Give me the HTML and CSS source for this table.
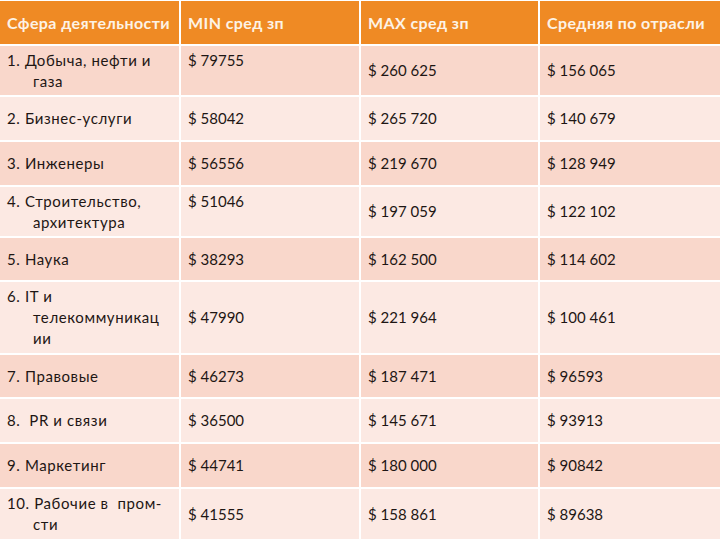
FILE: index.html
```html
<!DOCTYPE html>
<html lang="ru">
<head>
<meta charset="utf-8">
<link rel="stylesheet" href="styles.css">
</head>
<body>
<div class="table">
  <div class="row head">
    <div class="cell">Сфера деятельности</div>
    <div class="cell">MIN сред зп</div>
    <div class="cell">MAX сред зп</div>
    <div class="cell">Средняя по отрасли</div>
  </div>
  <div class="row odd h49">
    <div class="cell name top"><span class="line">1. Добыча, нефти и</span><span class="line cont">газа</span></div>
    <div class="cell top">$ 79755</div>
    <div class="cell">$ 260 625</div>
    <div class="cell">$ 156 065</div>
  </div>
  <div class="row even h43">
    <div class="cell name"><span class="line">2. Бизнес-услуги</span></div>
    <div class="cell">$ 58042</div>
    <div class="cell">$ 265 720</div>
    <div class="cell">$ 140 679</div>
  </div>
  <div class="row odd h43">
    <div class="cell name"><span class="line">3. Инженеры</span></div>
    <div class="cell">$ 56556</div>
    <div class="cell">$ 219 670</div>
    <div class="cell">$ 128 949</div>
  </div>
  <div class="row even h49">
    <div class="cell name top"><span class="line">4. Строительство,</span><span class="line cont">архитектура</span></div>
    <div class="cell top">$ 51046</div>
    <div class="cell">$ 197 059</div>
    <div class="cell">$ 122 102</div>
  </div>
  <div class="row odd h42">
    <div class="cell name"><span class="line">5. Наука</span></div>
    <div class="cell">$ 38293</div>
    <div class="cell">$ 162 500</div>
    <div class="cell">$ 114 602</div>
  </div>
  <div class="row even h71">
    <div class="cell name"><span class="line">6. IT и</span><span class="line cont">телекоммуникац</span><span class="line cont">ии</span></div>
    <div class="cell">$ 47990</div>
    <div class="cell">$ 221 964</div>
    <div class="cell">$ 100 461</div>
  </div>
  <div class="row odd h42">
    <div class="cell name"><span class="line">7. Правовые</span></div>
    <div class="cell">$ 46273</div>
    <div class="cell">$ 187 471</div>
    <div class="cell">$ 96593</div>
  </div>
  <div class="row even h43">
    <div class="cell name"><span class="line">8. &nbsp;PR и связи</span></div>
    <div class="cell">$ 36500</div>
    <div class="cell">$ 145 671</div>
    <div class="cell">$ 93913</div>
  </div>
  <div class="row odd h43">
    <div class="cell name"><span class="line">9. Маркетинг</span></div>
    <div class="cell">$ 44741</div>
    <div class="cell">$ 180 000</div>
    <div class="cell">$ 90842</div>
  </div>
  <div class="row even h50">
    <div class="cell name"><span class="line">10. Рабочие в &nbsp;пром-</span><span class="line cont">сти</span></div>
    <div class="cell">$ 41555</div>
    <div class="cell">$ 158 861</div>
    <div class="cell">$ 89638</div>
  </div>
</div>
</body>
</html>
```

FILE: styles.css
```css
html, body {
  margin: 0;
  padding: 0;
  background: #ffffff;
}
body {
  width: 720px;
  height: 540px;
  overflow: hidden;
  padding-top: 1px;
  font-family: Lato, "Liberation Sans", sans-serif;
  font-size: 15px;
  color: #1e1614;
}
.table {
  display: flex;
  flex-direction: column;
  gap: 2px;
}
.row {
  display: grid;
  grid-template-columns: 179px 178px 177px 180px;
  column-gap: 2px;
}
.cell {
  display: flex;
  flex-direction: column;
  justify-content: center;
  align-items: flex-start;
  padding: 0 4px 0 7px;
  line-height: 21px;
  white-space: nowrap;
}
.cell.top {
  justify-content: flex-start;
  padding-top: 4px;
}
.cell.name {
  letter-spacing: 0.6px;
}
.line {
  display: block;
}
.line.cont {
  padding-left: 26px;
}
.head {
  height: 43px;
}
.head .cell {
  background: #ef8a24;
  color: #fdf3e6;
  font-weight: bold;
  font-size: 16px;
  letter-spacing: 0.4px;
}
.odd .cell {
  background: #f9d7cb;
}
.even .cell {
  background: #fce9e3;
}
.h42 { height: 42px; }
.h43 { height: 43px; }
.h49 { height: 49px; }
.h50 { height: 50px; }
.h71 { height: 71px; }
```
